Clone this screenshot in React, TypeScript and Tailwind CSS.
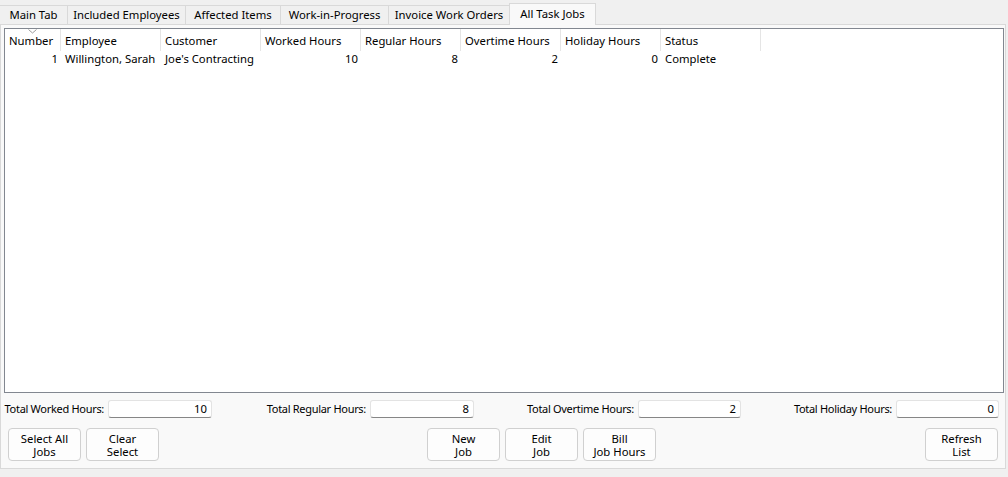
import React from "react";

const font = { fontFamily: '"Noto Sans", "Open Sans", sans-serif' };

const tabs = [
  { label: "Main Tab", w: 67 },
  { label: "Included Employees", w: 118 },
  { label: "Affected Items", w: 95 },
  { label: "Work-in-Progress", w: 108 },
  { label: "Invoice Work Orders", w: 121 },
  { label: "All Task Jobs", w: 87, active: true },
];

const cols = [
  { label: "Number", w: 56, right: true },
  { label: "Employee", w: 100 },
  { label: "Customer", w: 100 },
  { label: "Worked Hours", w: 100, right: true },
  { label: "Regular Hours", w: 100, right: true },
  { label: "Overtime Hours", w: 100, right: true },
  { label: "Holiday Hours", w: 100, right: true },
  { label: "Status", w: 100 },
];

const rows = [["1", "Willington, Sarah", "Joe's Contracting", "10", "8", "2", "0", "Complete"]];

function Total({ label, value, labelW, boxW }: { label: string; value: string; labelW: number; boxW: number }) {
  return (
    <div className="flex items-center">
      <span
        className="flex justify-end whitespace-nowrap pr-[4px] text-[11px] tracking-[-0.3px]"
        style={{ width: labelW }}
      >
        {label}
      </span>
      <div
        className="h-[18px] rounded-[3px] border border-[#e3e3e3] border-b-[#868686] bg-white pr-[4px] text-right leading-[16px]"
        style={{ width: boxW }}
      >
        {value}
      </div>
    </div>
  );
}

function Btn({ a, b }: { a: string; b: string }) {
  return (
    <button className="flex h-[33px] w-[73px] flex-col items-center justify-center rounded-[4px] border border-[#d0d0d0] bg-[#fdfdfd] text-[11.3px] leading-[13px] text-black">
      <span>{a}</span>
      <span>{b}</span>
    </button>
  );
}

export default function App() {
  return (
    <div className="flex h-[477px] w-[1008px] flex-col bg-[#f0f0f0] text-[11.3px] text-black" style={font}>
      <div className="flex h-[24px] items-end">
        {tabs.map((t) =>
          t.active ? (
            <div
              key={t.label}
              className="relative z-10 -mb-px flex h-[22px] items-center justify-center whitespace-nowrap border border-b-0 border-[#d9d9d9] bg-[#f9f9f9]"
              style={{ width: t.w }}
            >
              {t.label}
            </div>
          ) : (
            <div
              key={t.label}
              className="flex h-[19px] items-center justify-center whitespace-nowrap border border-b-0 border-r-0 border-[#d9d9d9] bg-[#f0f0f0] first:border-l-0"
              style={{ width: t.w }}
            >
              {t.label}
            </div>
          )
        )}
      </div>
      <div className="flex h-[445px] w-[1006px] flex-col border border-[#d9d9d9] bg-[#f9f9f9] px-[3px] pt-[3px]">
        <div className="relative h-[365px] w-[1000px] border border-[#828790] bg-white">
          <div className="flex h-[22px]">
            {cols.map((c, i) => (
              <div
                key={c.label}
                className="relative flex items-center whitespace-nowrap border-r border-[#e5e5e5] pl-[4px] pt-[2px]"
                style={{ width: c.w }}
              >
                {c.label}
                {i === 0 && (
                  <svg className="absolute left-[23px] top-[0px]" width="9" height="5" viewBox="0 0 9 5">
                    <path d="M0.5 0.5 L4.5 4 L8.5 0.5" fill="none" stroke="#9a9a9a" strokeWidth="1" />
                  </svg>
                )}
              </div>
            ))}
          </div>
          {rows.map((r, ri) => (
            <div key={ri} className="flex h-[17px] items-center">
              {r.map((v, i) => (
                <div
                  key={i}
                  className={cols[i].right ? "whitespace-nowrap pr-[3px] text-right" : "whitespace-nowrap pl-[4px]"}
                  style={{ width: cols[i].w }}
                >
                  {v}
                </div>
              ))}
            </div>
          ))}
        </div>
        <div className="mt-[7px] flex items-center">
          <Total label="Total Worked Hours:" value="10" labelW={104} boxW={104} />
          <Total label="Total Regular Hours:" value="8" labelW={158} boxW={104} />
          <Total label="Total Overtime Hours:" value="2" labelW={164} boxW={103} />
          <Total label="Total Holiday Hours:" value="0" labelW={155} boxW={103} />
        </div>
        <div className="mt-[10px] flex items-center pl-[4px] pr-[4px]">
          <div className="flex gap-[5px]">
            <Btn a="Select All" b="Jobs" />
            <Btn a="Clear" b="Select" />
          </div>
          <div className="ml-[268px] flex gap-[5px]">
            <Btn a="New" b="Job" />
            <Btn a="Edit" b="Job" />
            <Btn a="Bill" b="Job Hours" />
          </div>
          <div className="ml-auto">
            <Btn a="Refresh" b="List" />
          </div>
        </div>
      </div>
    </div>
  );
}
